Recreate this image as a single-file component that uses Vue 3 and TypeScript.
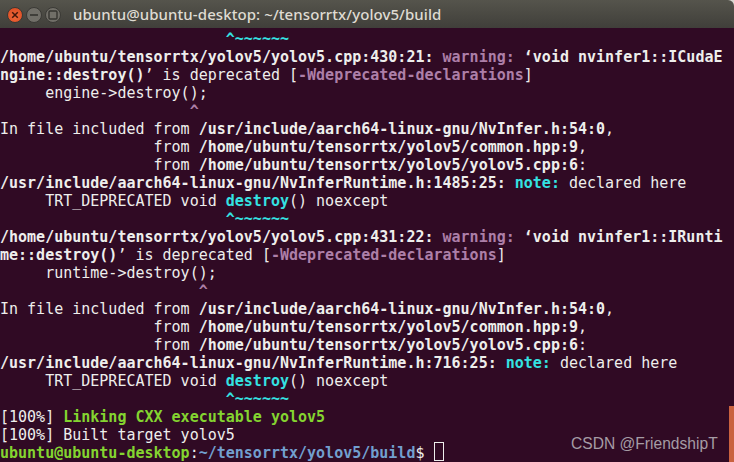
<script setup lang="ts">
type Seg = { t: string; c?: string };
const caret = (col: number, tail = "~~~~~~"): Seg[] => [
  { t: " ".repeat(col) },
  { t: "^" + tail, c: "cy b" },
];
const rows: Seg[][] = [
  caret(25),
  [
    { t: "/home/ubuntu/tensorrtx/yolov5/yolov5.cpp:430:21: ", c: "b" },
    { t: "warning: ", c: "mg b" },
    { t: "‘void nvinfer1::ICudaE", c: "b" },
  ],
  [
    { t: "ngine::destroy()", c: "b" },
    { t: "’ is deprecated [" },
    { t: "-Wdeprecated-declarations", c: "mg b" },
    { t: "]" },
  ],
  [{ t: "     engine->destroy();" }],
  [{ t: " ".repeat(21) }, { t: "^", c: "mg b" }],
  [
    { t: "In file included from " },
    { t: "/usr/include/aarch64-linux-gnu/NvInfer.h:54:0", c: "b" },
    { t: "," },
  ],
  [{ t: " ".repeat(17) + "from " }, { t: "/home/ubuntu/tensorrtx/yolov5/common.hpp:9", c: "b" }, { t: "," }],
  [{ t: " ".repeat(17) + "from " }, { t: "/home/ubuntu/tensorrtx/yolov5/yolov5.cpp:6", c: "b" }, { t: ":" }],
  [
    { t: "/usr/include/aarch64-linux-gnu/NvInferRuntime.h:1485:25: ", c: "b" },
    { t: "note: ", c: "cy b" },
    { t: "declared here" },
  ],
  [{ t: "     TRT_DEPRECATED void " }, { t: "destroy", c: "cy b" }, { t: "() noexcept" }],
  caret(25),
  [
    { t: "/home/ubuntu/tensorrtx/yolov5/yolov5.cpp:431:22: ", c: "b" },
    { t: "warning: ", c: "mg b" },
    { t: "‘void nvinfer1::IRunti", c: "b" },
  ],
  [
    { t: "me::destroy()", c: "b" },
    { t: "’ is deprecated [" },
    { t: "-Wdeprecated-declarations", c: "mg b" },
    { t: "]" },
  ],
  [{ t: "     runtime->destroy();" }],
  [{ t: " ".repeat(22) }, { t: "^", c: "mg b" }],
  [
    { t: "In file included from " },
    { t: "/usr/include/aarch64-linux-gnu/NvInfer.h:54:0", c: "b" },
    { t: "," },
  ],
  [{ t: " ".repeat(17) + "from " }, { t: "/home/ubuntu/tensorrtx/yolov5/common.hpp:9", c: "b" }, { t: "," }],
  [{ t: " ".repeat(17) + "from " }, { t: "/home/ubuntu/tensorrtx/yolov5/yolov5.cpp:6", c: "b" }, { t: ":" }],
  [
    { t: "/usr/include/aarch64-linux-gnu/NvInferRuntime.h:716:25: ", c: "b" },
    { t: "note: ", c: "cy b" },
    { t: "declared here" },
  ],
  [{ t: "     TRT_DEPRECATED void " }, { t: "destroy", c: "cy b" }, { t: "() noexcept" }],
  caret(25),
  [{ t: "[100%] " }, { t: "Linking CXX executable yolov5", c: "gr b" }],
  [{ t: "[100%] Built target yolov5" }],
  [
    { t: "ubuntu@ubuntu-desktop", c: "gr b" },
    { t: ":" },
    { t: "~/tensorrtx/yolov5/build", c: "bl b" },
    { t: "$ " },
  ],
];
</script>

<template>
  <div class="window">
    <header class="titlebar">
      <div class="controls">
        <span class="btn close">
          <svg width="8" height="8" viewBox="0 0 8 8"><path d="M1.2 1.2 6.8 6.8M6.8 1.2 1.2 6.8" stroke="#43170a" stroke-width="1.5" /></svg>
        </span>
        <span class="btn">
          <svg width="10" height="8" viewBox="0 0 10 8"><path d="M1 4H9" stroke="#35342f" stroke-width="1.6" /></svg>
        </span>
        <span class="btn">
          <svg width="10" height="10" viewBox="0 0 10 10"><rect x="1" y="1" width="8" height="8" rx="1" fill="none" stroke="#35342f" stroke-width="1.4" /></svg>
        </span>
      </div>
      <span class="title">ubuntu@ubuntu-desktop: ~/tensorrtx/yolov5/build</span>
    </header>
    <main class="term">
      <div v-for="(row, i) in rows" :key="i" class="row">
        <span v-for="(s, j) in row" :key="j" :class="s.c">{{ s.t }}</span>
        <span v-if="i === rows.length - 1" class="cursor"></span>
      </div>
    </main>
    <div class="strip"></div>
    <div class="mark">CSDN @FriendshipT</div>
  </div>
</template>

<style scoped>
.window {
  position: relative;
  width: 734px;
  height: 462px;
  overflow: hidden;
  background: #d9d8d2;
}
.titlebar {
  height: 28px;
  display: flex;
  align-items: center;
  border-radius: 0 6px 0 0;
  background: linear-gradient(#55544c, #403f3a);
}
.controls {
  display: flex;
  align-items: center;
  gap: 3px;
  margin: 2px 0 0 7px;
}
.btn {
  width: 16px;
  height: 16px;
  border-radius: 50%;
  display: flex;
  align-items: center;
  justify-content: center;
  background: #716f68;
  border: 0.5px solid #3a3935;
  box-sizing: border-box;
}
.close {
  background: radial-gradient(circle at 50% 60%, #f0693a, #d9481f);
}
.title {
  margin-left: 12px;
  padding-top: 1px;
  font: 500 15px/27px "Noto Sans", sans-serif;
  letter-spacing: 0.08px;
  color: #dfdbd2;
  white-space: nowrap;
}
.term {
  height: 434px;
  box-sizing: border-box;
  padding-top: 2px;
  background: #300a24;
  font: 15px/18px "DejaVu Sans Mono", monospace;
  color: #eeeeec;
}
.row {
  height: 18px;
  white-space: pre;
}
.b {
  font-weight: 700;
}
.cy {
  color: #34e2e2;
}
.mg {
  color: #ad7fa8;
}
.gr {
  color: #84d430;
}
.bl {
  color: #729fcf;
}
.cursor {
  position: absolute;
  width: 10px;
  height: 19px;
  margin-top: -2px;
  box-sizing: border-box;
  border: 1px solid #eeeeec;
}
.strip {
  position: absolute;
  right: 0;
  top: 406px;
  bottom: 0;
  width: 5px;
  background: #c9623f;
}
.mark {
  position: absolute;
  left: 571px;
  top: 434px;
  font: 15.6px/20px "Liberation Sans", sans-serif;
  color: #a59ca5;
  white-space: nowrap;
}
</style>
